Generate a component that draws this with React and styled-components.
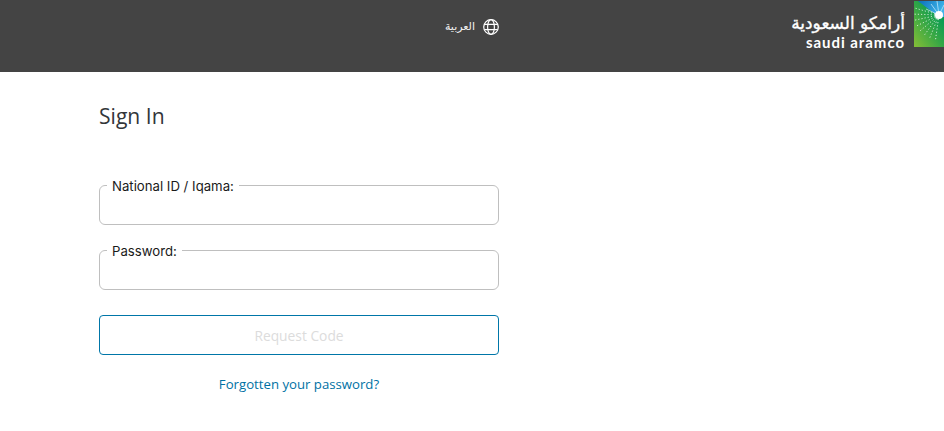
import React from 'react';
import styled, { createGlobalStyle } from 'styled-components';

const GlobalStyle = createGlobalStyle`
  html, body {
    margin: 0;
    padding: 0;
    background: #fff;
    font-family: "Open Sans", "Noto Sans", sans-serif;
  }
`;

const Header = styled.header`
  display: flex;
  align-items: flex-start;
  height: 72px;
  padding-left: 99px;
  background: #444444;
`;

const LangSwitch = styled.a`
  display: flex;
  justify-content: flex-end;
  align-items: center;
  gap: 8px;
  width: 400px;
  height: 54px;
  color: #f2f2f2;
  font-family: "Noto Sans", "DejaVu Sans", sans-serif;
  font-size: 11px;
`;

const LangLabel = styled.span`
  margin-bottom: 3px;
`;

const Logo = styled.div`
  display: flex;
  align-items: flex-start;
  margin-left: auto;
  padding-top: 1px;
`;

const LogoText = styled.div`
  display: flex;
  flex-direction: column;
  align-items: flex-end;
  margin: 12px 9px 0 0;
  color: #fff;
`;

const LogoArabic = styled.span`
  font-family: "DejaVu Sans", sans-serif;
  font-size: 17px;
  line-height: 20px;
  -webkit-text-stroke: 0.35px #fff;
  white-space: nowrap;
`;

const LogoLatin = styled.span`
  margin-top: 2px;
  font-family: "Lato", sans-serif;
  font-size: 15px;
  font-weight: 700;
  letter-spacing: 0.95px;
  line-height: 14px;
  white-space: nowrap;
`;

const Main = styled.main`
  width: 400px;
  margin-left: 99px;
`;

const Title = styled.h1`
  margin: 31px 0 0;
  color: #32363a;
  font-size: 21.1px;
  font-weight: 400;
  line-height: 26px;
`;

const Form = styled.form`
  display: flex;
  flex-direction: column;
  margin-top: 46px;
`;

const Field = styled.fieldset`
  height: 50px;
  box-sizing: border-box;
  margin: 0 0 15px;
  padding: 0 0 0 7px;
  border: 1px solid #bfbfbf;
  border-radius: 6px;
`;

const Legend = styled.legend`
  padding: 2px 5px 0;
  color: #1a1a1a;
  font-family: "Inter", sans-serif;
  font-size: 13.2px;
  line-height: 18px;
`;

const Input = styled.input`
  display: block;
  width: 100%;
  height: 28px;
  box-sizing: border-box;
  padding: 0 5px;
  border: 0;
  outline: 0;
  background: transparent;
`;

const SubmitButton = styled.button`
  height: 40px;
  margin-top: 10px;
  border: 1px solid #0076a8;
  border-radius: 4px;
  background: #fff;
  color: #dcdcdc;
  font-family: inherit;
  font-size: 13.8px;
`;

const ForgotLink = styled.a`
  display: block;
  margin-top: 20px;
  color: #0071a4;
  font-size: 13.2px;
  line-height: 18px;
  text-align: center;
  text-decoration: none;
`;

const GlobeIcon = () => (
  <svg width="16" height="16" viewBox="0 0 16 16" fill="none" stroke="#fff" strokeWidth="1.2">
    <circle cx="8" cy="8" r="7.3" />
    <ellipse cx="8" cy="8" rx="3.4" ry="7.3" />
    <path d="M1.4 5.3h13.2M1.4 10.7h13.2" />
  </svg>
);

const rays = [98, 112, 126, 140, 154, 168, 182, 196];

const LogoMark = () => (
  <svg width="30" height="46" viewBox="0 0 30 46">
    <defs>
      <linearGradient id="greenFill" x1="0" y1="1" x2="0.8" y2="0.15">
        <stop offset="0" stopColor="#86bd36" />
        <stop offset="0.55" stopColor="#38a845" />
        <stop offset="1" stopColor="#009a55" />
      </linearGradient>
      <linearGradient id="blueFill" x1="0" y1="0" x2="1" y2="0.4">
        <stop offset="0" stopColor="#0a6fb8" />
        <stop offset="1" stopColor="#3fb4ea" />
      </linearGradient>
    </defs>
    <rect width="30" height="46" fill="url(#greenFill)" />
    <path d="M4 0h26v16H25z" fill="url(#blueFill)" />
    {rays.map((angle) => {
      const a = angle * (Math.PI / 180);
      return (
        <line
          key={angle}
          x1={25 + Math.cos(a) * 4}
          y1={14 + Math.sin(a) * 4}
          x2={25 + Math.cos(a) * 26}
          y2={14 + Math.sin(a) * 26}
          stroke="#fff"
          strokeWidth="1"
          strokeDasharray="1.2 2"
          opacity="0.75"
        />
      );
    })}
    <path d="M25 14L17 3M25 14L23 0M25 14L30 4M25 14L12 8" stroke="#cfeefc" strokeWidth="1" opacity="0.7" />
    <circle cx="25" cy="14" r="4" fill="#fff" />
  </svg>
);

export default function App() {
  return (
    <>
      <GlobalStyle />
      <Header>
        <LangSwitch>
          <LangLabel dir="rtl">العربية</LangLabel>
          <GlobeIcon />
        </LangSwitch>
        <Logo>
          <LogoText>
            <LogoArabic dir="rtl">أرامكو السعودية</LogoArabic>
            <LogoLatin>saudi aramco</LogoLatin>
          </LogoText>
          <LogoMark />
        </Logo>
      </Header>
      <Main>
        <Title>Sign In</Title>
        <Form onSubmit={(e) => e.preventDefault()}>
          <Field>
            <Legend>National ID / Iqama:</Legend>
            <Input type="text" />
          </Field>
          <Field>
            <Legend>Password:</Legend>
            <Input type="password" />
          </Field>
          <SubmitButton type="submit">Request Code</SubmitButton>
        </Form>
        <ForgotLink href="#">Forgotten your password?</ForgotLink>
      </Main>
    </>
  );
}
